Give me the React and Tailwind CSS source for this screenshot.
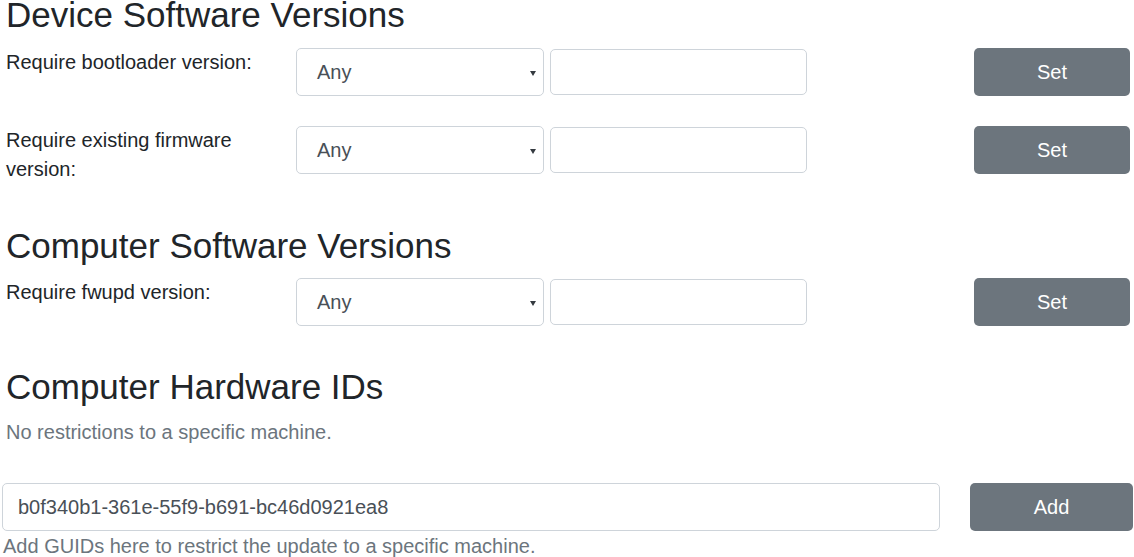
import React from "react";

const font = { fontFamily: '"Liberation Sans", Arial, Helvetica, sans-serif' };

function Select() {
  return (
    <div className="relative w-[248px] h-[48px] shrink-0 rounded-[5px] border border-[#ced4da] bg-white flex items-center pl-[20px] text-[20px] text-[#495057]">
      <span>Any</span>
      <svg className="absolute right-[7px] top-[22px] block" width="6" height="5" viewBox="0 0 6 5">
        <polygon points="0,0 6,0 3,5" fill="#343a40" />
      </svg>
    </div>
  );
}

function Row({ label, className = "" }) {
  return (
    <div className={"flex items-start " + className}>
      <div className="w-[296px] shrink-0 pl-[6px] pr-[20px] text-[20px] leading-[29px] text-[#212529]">
        {label}
      </div>
      <Select />
      <div className="ml-[6px] mt-[1px] w-[257px] h-[46px] shrink-0 rounded-[5px] border border-[#ced4da] bg-white" />
      <div className="flex-1" />
      <button className="mr-[4px] w-[156px] h-[48px] shrink-0 rounded-[5px] bg-[#6c757d] text-white text-[20px]">
        Set
      </button>
    </div>
  );
}

export default function App() {
  return (
    <div className="w-[1134px] h-[557px] overflow-hidden bg-white" style={font}>
      <h3 className="mt-[-6px] pl-[6px] text-[35px] leading-[42px] text-[#212529]">
        Device Software Versions
      </h3>
      <Row className="mt-[12px]" label="Require bootloader version:" />
      <Row className="mt-[30px]" label="Require existing firmware version:" />
      <h3 className="mt-[41px] pl-[6px] text-[35px] leading-[42px] text-[#212529]">
        Computer Software Versions
      </h3>
      <Row className="mt-[11px]" label="Require fwupd version:" />
      <h3 className="mt-[40px] pl-[6px] text-[35px] leading-[42px] text-[#212529]">
        Computer Hardware IDs
      </h3>
      <p className="mt-[9px] pl-[6px] text-[20px] leading-[30px] text-[#6c757d]">
        No restrictions to a specific machine.
      </p>
      <div className="mt-[36px] flex items-start">
        <div className="ml-[2px] w-[938px] h-[48px] rounded-[5px] border border-[#ced4da] bg-white flex items-center pl-[15px] text-[20px] text-[#495057]">
          b0f340b1-361e-55f9-b691-bc46d0921ea8
        </div>
        <button className="ml-[30px] w-[163px] h-[48px] rounded-[5px] bg-[#6c757d] text-white text-[20px]">
          Add
        </button>
      </div>
      <p className="pl-[3px] text-[20px] leading-[30px] text-[#6c757d]">
        Add GUIDs here to restrict the update to a specific machine.
      </p>
    </div>
  );
}
